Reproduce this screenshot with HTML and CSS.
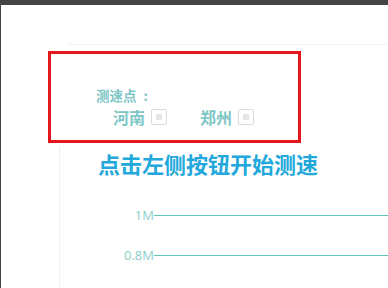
FILE: index.html
```html
<!DOCTYPE html>
<html lang="zh">
<head>
    <meta charset="UTF-8">
    <meta name="viewport" content="width=device-width, initial-scale=1.0">
    <title>测速</title>
    <link rel="stylesheet" href="styles.css">
</head>
<body>
    <div class="topbar"></div>
    <div class="page">
        <div class="rule"></div>
        <div class="picker">
            <div class="label">测速点<span class="colon">:</span></div>
            <div class="options">
                <span class="opt">河南<i class="box"></i></span>
                <span class="opt">郑州<i class="box"></i></span>
            </div>
        </div>
        <div class="panel">
            <h2 class="title">点击左侧按钮开始测速</h2>
            <div class="row"><span class="axis">1M</span><span class="line"></span></div>
            <div class="row"><span class="axis">0.8M</span><span class="line"></span></div>
        </div>
    </div>
</body>
</html>
```

FILE: styles.css
```css
* {
    margin: 0;
    padding: 0;
    box-sizing: border-box;
}
html, body {
    height: 100%;
    overflow: hidden;
}
body {
    background: #fff;
    font-family: "Noto Sans CJK SC", "Noto Sans", sans-serif;
}
.topbar {
    height: 5px;
    background: #454545;
}
.page {
    height: calc(100% - 5px);
    border-left: 1px solid #454545;
    padding-top: 39px;
}
.rule {
    height: 1px;
    margin-left: 67px;
    background: #f3f3f3;
}
.picker {
    margin-left: 47px;
    margin-top: 6px;
    width: 253px;
    height: 92px;
    border: 3px solid #e2161b;
    padding: 33px 0 0 45px;
}
.label {
    font-size: 13.5px;
    line-height: 16px;
    font-weight: bold;
    color: #7fc6c6;
}
.label .colon {
    margin-left: 7px;
}
.options {
    display: flex;
    gap: 33px;
    margin-top: 5px;
    padding-left: 17px;
}
.opt {
    display: flex;
    align-items: center;
    gap: 6px;
    font-size: 16px;
    line-height: 18px;
    font-weight: bold;
    color: #7fc6c6;
}
.opt .box {
    width: 16px;
    height: 16px;
    border: 1px solid #dcdcdc;
    border-radius: 2px;
    display: flex;
    align-items: center;
    justify-content: center;
}
.opt .box::after {
    content: "";
    width: 6px;
    height: 6px;
    background: #e6e6e6;
}
.panel {
    margin-left: 58px;
    margin-top: 3px;
    border-left: 1px solid #efefef;
    height: 150px;
}
.title {
    padding-left: 38px;
    font-size: 22px;
    line-height: 34px;
    font-weight: bold;
    color: #22a8dc;
}
.row {
    display: flex;
    align-items: center;
    height: 40px;
}
.row:first-of-type {
    margin-top: 15px;
}
.axis {
    width: 94px;
    text-align: right;
    font-size: 13px;
    color: #8ccdc7;
    font-family: "Open Sans", "Noto Sans", sans-serif;
}
.line {
    flex: 1;
    height: 1px;
    margin-top: 1px;
    background: #62c2bc;
}
```
